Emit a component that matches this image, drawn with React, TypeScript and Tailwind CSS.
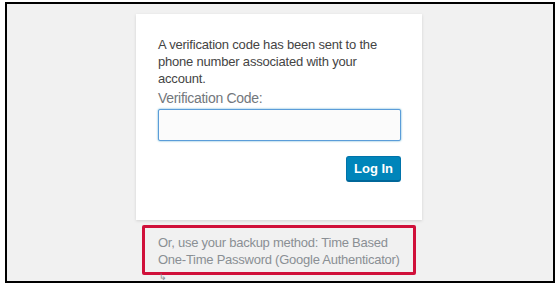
import React from 'react'

const font = { fontFamily: '"Liberation Sans", Arial, sans-serif' }

export default function App() {
    return (
        <div className="w-[560px] h-[286px] bg-white pt-[2px] pl-[5px]" style={font}>
            {/* framed screenshot */}
            <div className="w-[550px] h-[281px] border-2 border-black bg-[#f1f1f1] overflow-hidden">
                {/* login card */}
                <div className="ml-[129px] mt-[10px] w-[286px] h-[206px] bg-white shadow-[0_1px_3px_rgba(0,0,0,0.13)] pl-[22px] pr-[21px] pt-[22px]">
                    <p className="text-[13px] leading-[17px] tracking-[-0.2px] text-[#444]">
                        A verification code has been sent to the phone number associated with your account.
                    </p>
                    <label className="block text-[14px] leading-[20px] tracking-[-0.3px] text-[#72777c] mt-[1px]">
                        Verification Code:
                    </label>
                    <input
                        type="text"
                        className="block w-full h-[32px] mt-[1px] border border-[#5b9dd9] bg-[#fbfbfb] rounded-[2px] shadow-[0_0_2px_rgba(30,140,190,0.8)] outline-none"
                    />
                    <div className="flex justify-end mt-[15px]">
                        <button className="h-[26px] px-[7px] bg-[#0085ba] border border-[#0073aa] border-b-[#006799] border-b-2 rounded-[3px] text-white text-[13px] font-bold">
                            Log In
                        </button>
                    </div>
                </div>

                {/* backup method (highlighted) */}
                <div className="ml-[135px] mt-[5px] w-[274px] h-[50px] border-[3px] border-[#d0103a] rounded-[2px] pl-[13px] pt-[6px]">
                    <p className="text-[13px] leading-[17px] tracking-[-0.25px] text-[#8a8f94]">
                        Or, use your backup method: Time Based One-Time Password (Google Authenticator)
                    </p>
                </div>
                <div className="ml-[152px] mt-[-2px] text-[9px] leading-[8px] text-[#8a8f94]">↳</div>
            </div>
        </div>
    )
}
